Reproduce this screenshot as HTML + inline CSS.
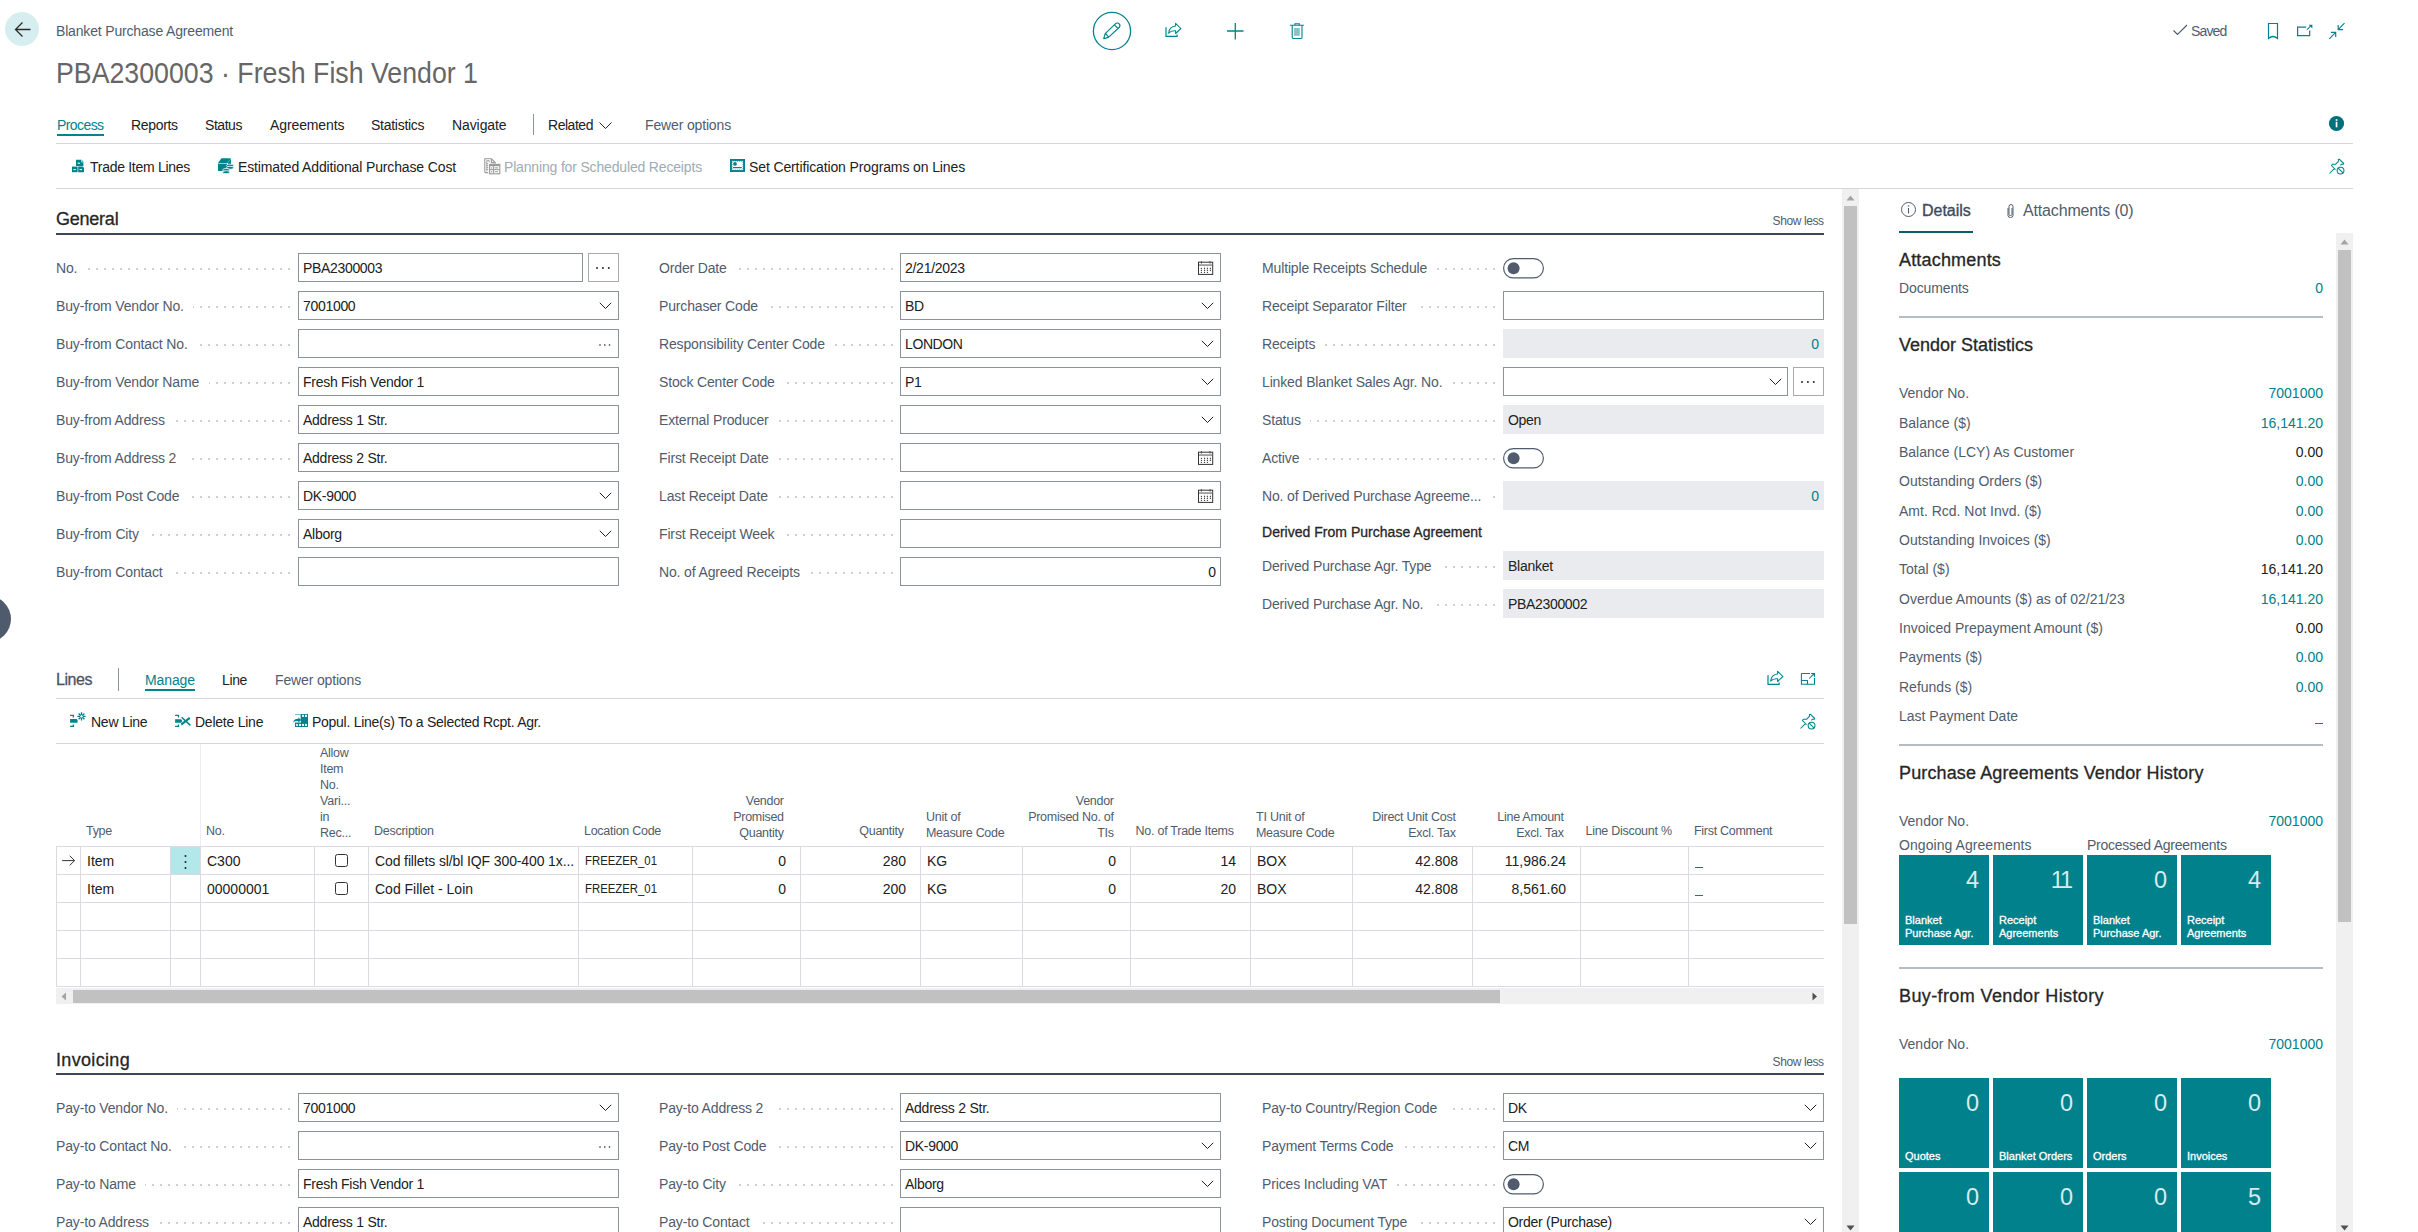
<!DOCTYPE html><html><head><meta charset="utf-8"><style>html,body{margin:0;padding:0;background:#fff;}#r{position:relative;width:2418px;height:1232px;overflow:hidden;background:#fff;font-family:"Liberation Sans",sans-serif;}#r>div,#r>svg{position:absolute;}.t{white-space:nowrap;}</style></head><body><div id="r"><svg style="left:5px;top:12px;" width="34" height="34" viewBox="0 0 34 34"><circle cx="17" cy="17" r="17" fill="#d7eef1"/><path d="M10.5 17.5H25.5M17.5 10.5L10.5 17.5L17.5 24.5" fill="none" stroke="#2b2b2b" stroke-width="1.3"/></svg>
<div class="t" style="top:24px;font-size:14px;line-height:14px;color:#505c6d;letter-spacing:-0.167px;left:56px;">Blanket Purchase Agreement</div>
<div class="t" style="top:58px;font-size:30px;line-height:30px;color:#666666;transform:scaleX(0.8910);transform-origin:left top;left:56px;">PBA2300003 · Fresh Fish Vendor 1</div>
<svg style="left:1091px;top:11px;" width="42" height="42" viewBox="0 0 42 42"><circle cx="21" cy="20" r="18.6" fill="none" stroke="#00838c" stroke-width="1.3"/><path d="M12.7 27.6L14.2 22.7L24.6 12.7Q26.5 11.2 28.2 12.9Q29.8 14.6 28.1 16.5L17.4 26.4Z M23.4 13.9L27 17.5 M14.5 22.5L17.5 25.8" fill="none" stroke="#00838c" stroke-width="1.15" stroke-linejoin="round"/></svg>
<svg style="left:1160px;top:18px;" width="24" height="22" viewBox="0 0 24 22"><path d="M6 9.2V18.3H17.1V16.4" fill="none" stroke="#00838c" stroke-width="1.2"/><path d="M8.6 15.2Q9.3 8.6 15.6 8.1V5.3L20.9 10.5L15.6 15.5V12.8Q11.2 12.3 8.6 15.2Z" fill="none" stroke="#00838c" stroke-width="1.05" stroke-linejoin="round"/></svg>
<svg style="left:1225px;top:21px;" width="22" height="20" viewBox="0 0 22 20"><path d="M2 10H18.5M10.3 2V18.5" fill="none" stroke="#00838c" stroke-width="1.3"/></svg>
<svg style="left:1288px;top:20px;" width="18" height="22" viewBox="0 0 18 22"><path d="M2.1 5.3H15.8M6.9 5.3V3.8H11.3V5.3M4.2 5.3V17.6Q4.2 18.5 5.1 18.5H13.1Q14 18.5 14 17.6V5.3" fill="none" stroke="#00838c" stroke-width="1.1"/><rect x="6.1" y="8" width="5.7" height="7.8" fill="#84c4c7"/></svg>
<svg style="left:2172px;top:23px;" width="18" height="14" viewBox="0 0 18 14"><path d="M1.5 7.5L5.5 11.5L15 2" fill="none" stroke="#505c6d" stroke-width="1.2"/></svg>
<div class="t" style="top:24px;font-size:14px;line-height:14px;color:#505c6d;letter-spacing:-0.839px;left:2191px;">Saved</div>
<svg style="left:2266px;top:22px;" width="14" height="18" viewBox="0 0 14 18"><path d="M2.5 1.5H11.5V16.5Q7 12.5 2.5 16.5Z" fill="none" stroke="#00838c" stroke-width="1.2"/></svg>
<svg style="left:2296px;top:23px;" width="18" height="15" viewBox="0 0 18 15"><path d="M10.2 4.2H1.6V12.7H13.7V7.4" fill="none" stroke="#00838c" stroke-width="1.2"/><path d="M11 6.6L15 2.6" fill="none" stroke="#00838c" stroke-width="1.1"/><path d="M12.6 1.8H16.4V5.6Z" fill="#00838c"/></svg>
<svg style="left:2328px;top:22px;" width="18" height="18" viewBox="0 0 18 18"><path d="M1.3 16.8L7.7 10.4M3 10.4H7.7V14.9M16.5 1.2L10.2 7.6M10.2 3V7.6H15" fill="none" stroke="#00838c" stroke-width="1.15"/></svg>
<div class="t" style="top:118px;font-size:14px;line-height:14px;color:#00838c;letter-spacing:-0.582px;left:57px;">Process</div>
<div class="t" style="top:118px;font-size:14px;line-height:14px;color:#212121;letter-spacing:-0.332px;left:131px;">Reports</div>
<div class="t" style="top:118px;font-size:14px;line-height:14px;color:#212121;letter-spacing:-0.448px;left:205px;">Status</div>
<div class="t" style="top:118px;font-size:14px;line-height:14px;color:#212121;letter-spacing:-0.108px;left:270px;">Agreements</div>
<div class="t" style="top:118px;font-size:14px;line-height:14px;color:#212121;letter-spacing:-0.271px;left:371px;">Statistics</div>
<div class="t" style="top:118px;font-size:14px;line-height:14px;color:#212121;letter-spacing:-0.094px;left:452px;">Navigate</div>
<div style="left:57px;top:134px;width:47px;height:2px;background:#00838c"></div>
<div style="left:533px;top:114px;width:1px;height:21px;background:#8a929e"></div>
<div class="t" style="top:118px;font-size:14px;line-height:14px;color:#212121;letter-spacing:-0.465px;left:548px;">Related</div>
<svg style="left:598px;top:121px;" width="15" height="9" viewBox="0 0 15 9"><path d="M1.5 1.5L7.5 7.5L13.5 1.5" fill="none" stroke="#212121" stroke-width="1"/></svg>
<div class="t" style="top:118px;font-size:14px;line-height:14px;color:#505c6d;letter-spacing:-0.149px;left:645px;">Fewer options</div>
<svg style="left:2328px;top:115px;" width="17" height="17" viewBox="0 0 17 17"><circle cx="8.5" cy="8.5" r="7.6" fill="#00707a"/><rect x="7.7" y="6.8" width="1.7" height="5.5" fill="#fff"/><rect x="7.7" y="4.2" width="1.7" height="1.7" fill="#fff"/></svg>
<div style="left:56px;top:143px;width:2297px;height:1px;background:#d3d6db"></div>
<svg style="left:72px;top:159px;" width="14" height="14" viewBox="0 0 14 14"><path d="M4 0.8H9.6L11.4 2.4V7H4Z" fill="#00838c"/><path d="M0 7.6H5.6V13.2H0Z" fill="#00838c"/><path d="M6.2 7.6H10.8L12 8.8V13.2H6.2Z" fill="#00838c"/><path d="M5.6 4.2H8M1.4 10.6H3.8M7.6 10.6H10" stroke="#fff" stroke-width="1"/><path d="M9.6 1V3H11.4" stroke="#fff" stroke-width="0.7" fill="none"/></svg>
<div class="t" style="top:160px;font-size:14px;line-height:14px;color:#212121;letter-spacing:-0.283px;left:90px;">Trade Item Lines</div>
<svg style="left:217px;top:157px;" width="18" height="18" viewBox="0 0 18 18"><path d="M1 6L4.5 1.2H14L10.5 6Z" fill="#00838c"/><rect x="1" y="6.6" width="9" height="7.4" fill="#00838c"/><path d="M11 5.6L14 1.8V8L11 10Z" fill="#00838c"/><ellipse cx="13" cy="8.6" rx="3.6" ry="1.5" fill="#00838c" stroke="#fff" stroke-width="0.8"/><ellipse cx="13" cy="10.8" rx="3.6" ry="1.5" fill="#00838c" stroke="#fff" stroke-width="0.8"/><ellipse cx="9.2" cy="13" rx="3.6" ry="1.5" fill="#00838c" stroke="#fff" stroke-width="0.8"/><ellipse cx="9.2" cy="15.2" rx="3.6" ry="1.5" fill="#00838c" stroke="#fff" stroke-width="0.8"/></svg>
<div class="t" style="top:160px;font-size:14px;line-height:14px;color:#212121;letter-spacing:-0.134px;left:238px;">Estimated Additional Purchase Cost</div>
<svg style="left:484px;top:158px;" width="17" height="17" viewBox="0 0 17 17"><path d="M0.8 14.6V0.8H7.4L11.2 4.6V5.8M0.8 14.6H4.2M7.4 1V4.6H11" fill="none" stroke="#9a9a9a" stroke-width="1.1"/><path d="M2.8 2.6H5.2V4.4M2.8 2.6V13.2M2.8 5.6H4.2M2.8 7.6H4.2M2.8 9.6H4.2M2.8 11.6H4.2" fill="none" stroke="#9a9a9a" stroke-width="0.9"/><rect x="5.6" y="6.4" width="10.2" height="9.4" fill="none" stroke="#9a9a9a" stroke-width="1.1"/><rect x="5.6" y="6.4" width="10.2" height="1.8" fill="#9a9a9a"/><path d="M5.6 11.6H15.8M9.4 6.4V15.8M10.6 9.9H14M10.6 13.7H14.2" stroke="#9a9a9a" stroke-width="1"/><circle cx="7.5" cy="9.9" r="0.7" fill="#9a9a9a"/><circle cx="7.5" cy="13.7" r="0.7" fill="#9a9a9a"/></svg>
<div class="t" style="top:160px;font-size:14px;line-height:14px;color:#a2aab5;letter-spacing:-0.166px;left:504px;">Planning for Scheduled Receipts</div>
<svg style="left:730px;top:159px;" width="15" height="13" viewBox="0 0 15 13"><rect x="0" y="0" width="15" height="13" fill="#00838c"/><rect x="1.9" y="1.9" width="11.2" height="9.2" fill="#fff"/><circle cx="3.1" cy="1.9" r="0.6" fill="#00838c"/><circle cx="3.1" cy="11.1" r="0.6" fill="#00838c"/><circle cx="5.3" cy="1.9" r="0.6" fill="#00838c"/><circle cx="5.3" cy="11.1" r="0.6" fill="#00838c"/><circle cx="7.5" cy="1.9" r="0.6" fill="#00838c"/><circle cx="7.5" cy="11.1" r="0.6" fill="#00838c"/><circle cx="9.7" cy="1.9" r="0.6" fill="#00838c"/><circle cx="9.7" cy="11.1" r="0.6" fill="#00838c"/><circle cx="11.9" cy="1.9" r="0.6" fill="#00838c"/><circle cx="11.9" cy="11.1" r="0.6" fill="#00838c"/><circle cx="1.9" cy="3.5" r="0.6" fill="#00838c"/><circle cx="13.1" cy="3.5" r="0.6" fill="#00838c"/><circle cx="1.9" cy="5.5" r="0.6" fill="#00838c"/><circle cx="13.1" cy="5.5" r="0.6" fill="#00838c"/><circle cx="1.9" cy="7.5" r="0.6" fill="#00838c"/><circle cx="13.1" cy="7.5" r="0.6" fill="#00838c"/><circle cx="1.9" cy="9.5" r="0.6" fill="#00838c"/><circle cx="13.1" cy="9.5" r="0.6" fill="#00838c"/><circle cx="5" cy="4.9" r="1.9" fill="#00838c"/><rect x="2.9" y="8" width="8.8" height="1.2" fill="#00838c"/></svg>
<div class="t" style="top:160px;font-size:14px;line-height:14px;color:#212121;letter-spacing:-0.120px;left:749px;">Set Certification Programs on Lines</div>
<svg style="left:2324px;top:154px;" width="24" height="24" viewBox="0 0 24 24"><path d="M5.45 19.5L10.3 14.6M11.5 15.6L7.4 11.5L8.4 10.3H11.5L14.4 7.4V5.5L15.3 5.2L19.7 9.5L19.3 10.3H17.3L16.4 11.4" fill="none" stroke="#00838c" stroke-width="1.05" stroke-linejoin="round"/><circle cx="16.55" cy="16.6" r="3.4" fill="none" stroke="#00838c" stroke-width="1.05"/><path d="M14.2 14.2L18.9 18.9" stroke="#00838c" stroke-width="1.05"/></svg>
<div style="left:56px;top:188px;width:2297px;height:1px;background:#d3d6db"></div>
<div class="t" style="top:210px;font-size:18px;line-height:18px;color:#262626;-webkit-text-stroke:0.3px #262626;letter-spacing:-0.234px;left:56px;">General</div>
<div class="t" style="top:215px;font-size:12px;line-height:12px;color:#505c6d;letter-spacing:-0.410px;right:594px;margin-right:0.410px;">Show less</div>
<div style="left:56px;top:233px;width:1768px;height:2px;background:#3c4757"></div>
<div class="t" style="top:261px;font-size:14px;line-height:14px;color:#505c6d;letter-spacing:-0.160px;left:56px;">No.</div>
<div style="left:87px;top:268px;width:203px;height:2px;background:repeating-linear-gradient(to left,#cdd1d7 0 2px,transparent 2px 8px)"></div>
<div style="left:298px;top:253px;width:285px;height:29px;box-sizing:border-box;border:1px solid #8a929e;background:#fff"></div>
<div style="left:588px;top:253px;width:31px;height:29px;box-sizing:border-box;border:1px solid #aaaaaa;background:#fff"></div>
<svg style="left:595.4px;top:266.2px;" width="15.8" height="4" viewBox="0 0 15.8 4"><circle cx="2.0" cy="2" r="0.95" fill="#212121"/><circle cx="7.9" cy="2" r="0.95" fill="#212121"/><circle cx="13.8" cy="2" r="0.95" fill="#212121"/></svg>
<div class="t" style="top:261px;font-size:14px;line-height:14px;color:#212121;letter-spacing:-0.330px;left:303px;">PBA2300003</div>
<div class="t" style="top:299px;font-size:14px;line-height:14px;color:#505c6d;letter-spacing:-0.151px;left:56px;">Buy-from Vendor No.</div>
<div style="left:193px;top:306px;width:97px;height:2px;background:repeating-linear-gradient(to left,#cdd1d7 0 2px,transparent 2px 8px)"></div>
<div style="left:298px;top:291px;width:321px;height:29px;box-sizing:border-box;border:1px solid #8a929e;background:#fff"></div>
<svg style="left:599px;top:302px;" width="14" height="8" viewBox="0 0 14 8"><path d="M0.8 0.8L6.5 6.5L12.2 0.8" fill="none" stroke="#212121" stroke-width="1"/></svg>
<div class="t" style="top:299px;font-size:14px;line-height:14px;color:#212121;letter-spacing:-0.311px;left:303px;">7001000</div>
<div class="t" style="top:337px;font-size:14px;line-height:14px;color:#505c6d;letter-spacing:-0.148px;left:56px;">Buy-from Contact No.</div>
<div style="left:197px;top:344px;width:93px;height:2px;background:repeating-linear-gradient(to left,#cdd1d7 0 2px,transparent 2px 8px)"></div>
<div style="left:298px;top:329px;width:321px;height:29px;box-sizing:border-box;border:1px solid #8a929e;background:#fff"></div>
<svg style="left:598.05px;top:342.5px;" width="13.5" height="4" viewBox="0 0 13.5 4"><circle cx="2.0" cy="2" r="0.8" fill="#212121"/><circle cx="6.75" cy="2" r="0.8" fill="#212121"/><circle cx="11.5" cy="2" r="0.8" fill="#212121"/></svg>
<div class="t" style="top:375px;font-size:14px;line-height:14px;color:#505c6d;letter-spacing:-0.161px;left:56px;">Buy-from Vendor Name</div>
<div style="left:209px;top:382px;width:81px;height:2px;background:repeating-linear-gradient(to left,#cdd1d7 0 2px,transparent 2px 8px)"></div>
<div style="left:298px;top:367px;width:321px;height:29px;box-sizing:border-box;border:1px solid #8a929e;background:#fff"></div>
<div class="t" style="top:375px;font-size:14px;line-height:14px;color:#212121;letter-spacing:-0.265px;left:303px;">Fresh Fish Vendor 1</div>
<div class="t" style="top:413px;font-size:14px;line-height:14px;color:#505c6d;letter-spacing:-0.153px;left:56px;">Buy-from Address</div>
<div style="left:174px;top:420px;width:116px;height:2px;background:repeating-linear-gradient(to left,#cdd1d7 0 2px,transparent 2px 8px)"></div>
<div style="left:298px;top:405px;width:321px;height:29px;box-sizing:border-box;border:1px solid #8a929e;background:#fff"></div>
<div class="t" style="top:413px;font-size:14px;line-height:14px;color:#212121;letter-spacing:-0.251px;left:303px;">Address 1 Str.</div>
<div class="t" style="top:451px;font-size:14px;line-height:14px;color:#505c6d;letter-spacing:-0.150px;left:56px;">Buy-from Address 2</div>
<div style="left:186px;top:458px;width:104px;height:2px;background:repeating-linear-gradient(to left,#cdd1d7 0 2px,transparent 2px 8px)"></div>
<div style="left:298px;top:443px;width:321px;height:29px;box-sizing:border-box;border:1px solid #8a929e;background:#fff"></div>
<div class="t" style="top:451px;font-size:14px;line-height:14px;color:#212121;letter-spacing:-0.251px;left:303px;">Address 2 Str.</div>
<div class="t" style="top:489px;font-size:14px;line-height:14px;color:#505c6d;letter-spacing:-0.154px;left:56px;">Buy-from Post Code</div>
<div style="left:189px;top:496px;width:101px;height:2px;background:repeating-linear-gradient(to left,#cdd1d7 0 2px,transparent 2px 8px)"></div>
<div style="left:298px;top:481px;width:321px;height:29px;box-sizing:border-box;border:1px solid #8a929e;background:#fff"></div>
<svg style="left:599px;top:492px;" width="14" height="8" viewBox="0 0 14 8"><path d="M0.8 0.8L6.5 6.5L12.2 0.8" fill="none" stroke="#212121" stroke-width="1"/></svg>
<div class="t" style="top:489px;font-size:14px;line-height:14px;color:#212121;letter-spacing:-0.316px;left:303px;">DK-9000</div>
<div class="t" style="top:527px;font-size:14px;line-height:14px;color:#505c6d;letter-spacing:-0.143px;left:56px;">Buy-from City</div>
<div style="left:148px;top:534px;width:142px;height:2px;background:repeating-linear-gradient(to left,#cdd1d7 0 2px,transparent 2px 8px)"></div>
<div style="left:298px;top:519px;width:321px;height:29px;box-sizing:border-box;border:1px solid #8a929e;background:#fff"></div>
<svg style="left:599px;top:530px;" width="14" height="8" viewBox="0 0 14 8"><path d="M0.8 0.8L6.5 6.5L12.2 0.8" fill="none" stroke="#212121" stroke-width="1"/></svg>
<div class="t" style="top:527px;font-size:14px;line-height:14px;color:#212121;letter-spacing:-0.270px;left:303px;">Alborg</div>
<div class="t" style="top:565px;font-size:14px;line-height:14px;color:#505c6d;letter-spacing:-0.150px;left:56px;">Buy-from Contact</div>
<div style="left:172px;top:572px;width:118px;height:2px;background:repeating-linear-gradient(to left,#cdd1d7 0 2px,transparent 2px 8px)"></div>
<div style="left:298px;top:557px;width:321px;height:29px;box-sizing:border-box;border:1px solid #8a929e;background:#fff"></div>
<div class="t" style="top:261px;font-size:14px;line-height:14px;color:#505c6d;letter-spacing:-0.152px;left:659px;">Order Date</div>
<div style="left:736px;top:268px;width:157px;height:2px;background:repeating-linear-gradient(to left,#cdd1d7 0 2px,transparent 2px 8px)"></div>
<div style="left:900px;top:253px;width:321px;height:29px;box-sizing:border-box;border:1px solid #8a929e;background:#fff"></div>
<svg style="left:1194px;top:256px;" width="22" height="22" viewBox="0 0 22 22"><rect x="4.5" y="6.2" width="14.2" height="12.2" fill="none" stroke="#333" stroke-width="1"/><rect x="5" y="8.3" width="13.2" height="1.5" fill="#8a8a8a"/><path d="M7.4 5V7.6M16 5V7.6" stroke="#444" stroke-width="0.9"/><path d="M10.5 10.2V15M13.4 10.2V15M16.4 10.2V15" stroke="#c9c9d6" stroke-width="0.6"/><circle cx="7.4" cy="12.5" r="0.65" fill="#444"/><circle cx="7.4" cy="14.4" r="0.65" fill="#444"/><circle cx="7.4" cy="16.4" r="0.65" fill="#444"/><circle cx="10.5" cy="12.5" r="0.65" fill="#444"/><circle cx="10.5" cy="14.4" r="0.65" fill="#444"/><circle cx="10.5" cy="16.4" r="0.65" fill="#444"/><circle cx="13.4" cy="12.5" r="0.65" fill="#444"/><circle cx="13.4" cy="14.4" r="0.65" fill="#444"/><circle cx="13.4" cy="16.4" r="0.65" fill="#444"/><circle cx="16.4" cy="12.5" r="0.65" fill="#444"/><circle cx="16.4" cy="14.4" r="0.65" fill="#444"/></svg>
<div class="t" style="top:261px;font-size:14px;line-height:14px;color:#212121;letter-spacing:-0.277px;left:905px;">2/21/2023</div>
<div class="t" style="top:299px;font-size:14px;line-height:14px;color:#505c6d;letter-spacing:-0.159px;left:659px;">Purchaser Code</div>
<div style="left:767px;top:306px;width:126px;height:2px;background:repeating-linear-gradient(to left,#cdd1d7 0 2px,transparent 2px 8px)"></div>
<div style="left:900px;top:291px;width:321px;height:29px;box-sizing:border-box;border:1px solid #8a929e;background:#fff"></div>
<svg style="left:1201px;top:302px;" width="14" height="8" viewBox="0 0 14 8"><path d="M0.8 0.8L6.5 6.5L12.2 0.8" fill="none" stroke="#212121" stroke-width="1"/></svg>
<div class="t" style="top:299px;font-size:14px;line-height:14px;color:#212121;letter-spacing:-0.389px;left:905px;">BD</div>
<div class="t" style="top:337px;font-size:14px;line-height:14px;color:#505c6d;letter-spacing:-0.144px;left:659px;">Responsibility Center Code</div>
<div style="left:834px;top:344px;width:59px;height:2px;background:repeating-linear-gradient(to left,#cdd1d7 0 2px,transparent 2px 8px)"></div>
<div style="left:900px;top:329px;width:321px;height:29px;box-sizing:border-box;border:1px solid #8a929e;background:#fff"></div>
<svg style="left:1201px;top:340px;" width="14" height="8" viewBox="0 0 14 8"><path d="M0.8 0.8L6.5 6.5L12.2 0.8" fill="none" stroke="#212121" stroke-width="1"/></svg>
<div class="t" style="top:337px;font-size:14px;line-height:14px;color:#212121;letter-spacing:-0.399px;left:905px;">LONDON</div>
<div class="t" style="top:375px;font-size:14px;line-height:14px;color:#505c6d;letter-spacing:-0.153px;left:659px;">Stock Center Code</div>
<div style="left:784px;top:382px;width:109px;height:2px;background:repeating-linear-gradient(to left,#cdd1d7 0 2px,transparent 2px 8px)"></div>
<div style="left:900px;top:367px;width:321px;height:29px;box-sizing:border-box;border:1px solid #8a929e;background:#fff"></div>
<svg style="left:1201px;top:378px;" width="14" height="8" viewBox="0 0 14 8"><path d="M0.8 0.8L6.5 6.5L12.2 0.8" fill="none" stroke="#212121" stroke-width="1"/></svg>
<div class="t" style="top:375px;font-size:14px;line-height:14px;color:#212121;letter-spacing:-0.342px;left:905px;">P1</div>
<div class="t" style="top:413px;font-size:14px;line-height:14px;color:#505c6d;letter-spacing:-0.145px;left:659px;">External Producer</div>
<div style="left:778px;top:420px;width:115px;height:2px;background:repeating-linear-gradient(to left,#cdd1d7 0 2px,transparent 2px 8px)"></div>
<div style="left:900px;top:405px;width:321px;height:29px;box-sizing:border-box;border:1px solid #8a929e;background:#fff"></div>
<svg style="left:1201px;top:416px;" width="14" height="8" viewBox="0 0 14 8"><path d="M0.8 0.8L6.5 6.5L12.2 0.8" fill="none" stroke="#212121" stroke-width="1"/></svg>
<div class="t" style="top:451px;font-size:14px;line-height:14px;color:#505c6d;letter-spacing:-0.137px;left:659px;">First Receipt Date</div>
<div style="left:778px;top:458px;width:115px;height:2px;background:repeating-linear-gradient(to left,#cdd1d7 0 2px,transparent 2px 8px)"></div>
<div style="left:900px;top:443px;width:321px;height:29px;box-sizing:border-box;border:1px solid #8a929e;background:#fff"></div>
<svg style="left:1194px;top:446px;" width="22" height="22" viewBox="0 0 22 22"><rect x="4.5" y="6.2" width="14.2" height="12.2" fill="none" stroke="#333" stroke-width="1"/><rect x="5" y="8.3" width="13.2" height="1.5" fill="#8a8a8a"/><path d="M7.4 5V7.6M16 5V7.6" stroke="#444" stroke-width="0.9"/><path d="M10.5 10.2V15M13.4 10.2V15M16.4 10.2V15" stroke="#c9c9d6" stroke-width="0.6"/><circle cx="7.4" cy="12.5" r="0.65" fill="#444"/><circle cx="7.4" cy="14.4" r="0.65" fill="#444"/><circle cx="7.4" cy="16.4" r="0.65" fill="#444"/><circle cx="10.5" cy="12.5" r="0.65" fill="#444"/><circle cx="10.5" cy="14.4" r="0.65" fill="#444"/><circle cx="10.5" cy="16.4" r="0.65" fill="#444"/><circle cx="13.4" cy="12.5" r="0.65" fill="#444"/><circle cx="13.4" cy="14.4" r="0.65" fill="#444"/><circle cx="13.4" cy="16.4" r="0.65" fill="#444"/><circle cx="16.4" cy="12.5" r="0.65" fill="#444"/><circle cx="16.4" cy="14.4" r="0.65" fill="#444"/></svg>
<div class="t" style="top:489px;font-size:14px;line-height:14px;color:#505c6d;letter-spacing:-0.144px;left:659px;">Last Receipt Date</div>
<div style="left:777px;top:496px;width:116px;height:2px;background:repeating-linear-gradient(to left,#cdd1d7 0 2px,transparent 2px 8px)"></div>
<div style="left:900px;top:481px;width:321px;height:29px;box-sizing:border-box;border:1px solid #8a929e;background:#fff"></div>
<svg style="left:1194px;top:484px;" width="22" height="22" viewBox="0 0 22 22"><rect x="4.5" y="6.2" width="14.2" height="12.2" fill="none" stroke="#333" stroke-width="1"/><rect x="5" y="8.3" width="13.2" height="1.5" fill="#8a8a8a"/><path d="M7.4 5V7.6M16 5V7.6" stroke="#444" stroke-width="0.9"/><path d="M10.5 10.2V15M13.4 10.2V15M16.4 10.2V15" stroke="#c9c9d6" stroke-width="0.6"/><circle cx="7.4" cy="12.5" r="0.65" fill="#444"/><circle cx="7.4" cy="14.4" r="0.65" fill="#444"/><circle cx="7.4" cy="16.4" r="0.65" fill="#444"/><circle cx="10.5" cy="12.5" r="0.65" fill="#444"/><circle cx="10.5" cy="14.4" r="0.65" fill="#444"/><circle cx="10.5" cy="16.4" r="0.65" fill="#444"/><circle cx="13.4" cy="12.5" r="0.65" fill="#444"/><circle cx="13.4" cy="14.4" r="0.65" fill="#444"/><circle cx="13.4" cy="16.4" r="0.65" fill="#444"/><circle cx="16.4" cy="12.5" r="0.65" fill="#444"/><circle cx="16.4" cy="14.4" r="0.65" fill="#444"/></svg>
<div class="t" style="top:527px;font-size:14px;line-height:14px;color:#505c6d;letter-spacing:-0.144px;left:659px;">First Receipt Week</div>
<div style="left:784px;top:534px;width:109px;height:2px;background:repeating-linear-gradient(to left,#cdd1d7 0 2px,transparent 2px 8px)"></div>
<div style="left:900px;top:519px;width:321px;height:29px;box-sizing:border-box;border:1px solid #8a929e;background:#fff"></div>
<div class="t" style="top:565px;font-size:14px;line-height:14px;color:#505c6d;letter-spacing:-0.144px;left:659px;">No. of Agreed Receipts</div>
<div style="left:809px;top:572px;width:84px;height:2px;background:repeating-linear-gradient(to left,#cdd1d7 0 2px,transparent 2px 8px)"></div>
<div style="left:900px;top:557px;width:321px;height:29px;box-sizing:border-box;border:1px solid #8a929e;background:#fff"></div>
<div class="t" style="top:565px;font-size:14px;line-height:14px;color:#212121;right:1202px;">0</div>
<div class="t" style="top:261px;font-size:14px;line-height:14px;color:#505c6d;letter-spacing:-0.143px;left:1262px;">Multiple Receipts Schedule</div>
<div style="left:1437px;top:268px;width:58px;height:2px;background:repeating-linear-gradient(to left,#cdd1d7 0 2px,transparent 2px 8px)"></div>
<svg style="left:1503px;top:258px;" width="41" height="21" viewBox="0 0 41 21"><rect x="0.6" y="0.6" width="39.8" height="19.3" rx="9.6" fill="#fff" stroke="#505c6d" stroke-width="1.2"/><circle cx="10.6" cy="10.2" r="6" fill="#505c6d"/></svg>
<div class="t" style="top:299px;font-size:14px;line-height:14px;color:#505c6d;letter-spacing:-0.136px;left:1262px;">Receipt Separator Filter</div>
<div style="left:1416px;top:306px;width:79px;height:2px;background:repeating-linear-gradient(to left,#cdd1d7 0 2px,transparent 2px 8px)"></div>
<div style="left:1503px;top:291px;width:321px;height:29px;box-sizing:border-box;border:1px solid #8a929e;background:#fff"></div>
<div class="t" style="top:337px;font-size:14px;line-height:14px;color:#505c6d;letter-spacing:-0.150px;left:1262px;">Receipts</div>
<div style="left:1325px;top:344px;width:170px;height:2px;background:repeating-linear-gradient(to left,#cdd1d7 0 2px,transparent 2px 8px)"></div>
<div style="left:1503px;top:329px;width:321px;height:29px;background:#eaebee"></div>
<div class="t" style="top:337px;font-size:14px;line-height:14px;color:#00808a;right:599px;">0</div>
<div class="t" style="top:375px;font-size:14px;line-height:14px;color:#505c6d;letter-spacing:-0.140px;left:1262px;">Linked Blanket Sales Agr. No.</div>
<div style="left:1452px;top:382px;width:43px;height:2px;background:repeating-linear-gradient(to left,#cdd1d7 0 2px,transparent 2px 8px)"></div>
<div style="left:1503px;top:367px;width:285px;height:29px;box-sizing:border-box;border:1px solid #8a929e;background:#fff"></div>
<div style="left:1793px;top:367px;width:31px;height:29px;box-sizing:border-box;border:1px solid #aaaaaa;background:#fff"></div>
<svg style="left:1769px;top:378px;" width="14" height="8" viewBox="0 0 14 8"><path d="M0.8 0.8L6.5 6.5L12.2 0.8" fill="none" stroke="#212121" stroke-width="1"/></svg>
<svg style="left:1800.3999999999999px;top:380.2px;" width="15.8" height="4" viewBox="0 0 15.8 4"><circle cx="2.0" cy="2" r="0.95" fill="#212121"/><circle cx="7.9" cy="2" r="0.95" fill="#212121"/><circle cx="13.8" cy="2" r="0.95" fill="#212121"/></svg>
<div class="t" style="top:413px;font-size:14px;line-height:14px;color:#505c6d;letter-spacing:-0.146px;left:1262px;">Status</div>
<div style="left:1310px;top:420px;width:185px;height:2px;background:repeating-linear-gradient(to left,#cdd1d7 0 2px,transparent 2px 8px)"></div>
<div style="left:1503px;top:405px;width:321px;height:29px;background:#eaebee"></div>
<div class="t" style="top:413px;font-size:14px;line-height:14px;color:#212121;letter-spacing:-0.342px;left:1508px;">Open</div>
<div class="t" style="top:451px;font-size:14px;line-height:14px;color:#505c6d;letter-spacing:-0.140px;left:1262px;">Active</div>
<div style="left:1309px;top:458px;width:186px;height:2px;background:repeating-linear-gradient(to left,#cdd1d7 0 2px,transparent 2px 8px)"></div>
<svg style="left:1503px;top:448px;" width="41" height="21" viewBox="0 0 41 21"><rect x="0.6" y="0.6" width="39.8" height="19.3" rx="9.6" fill="#fff" stroke="#505c6d" stroke-width="1.2"/><circle cx="10.6" cy="10.2" r="6" fill="#505c6d"/></svg>
<div class="t" style="top:489px;font-size:14px;line-height:14px;color:#505c6d;letter-spacing:-0.145px;left:1262px;">No. of Derived Purchase Agreeme...</div>
<div style="left:1491px;top:496px;width:4px;height:2px;background:repeating-linear-gradient(to left,#cdd1d7 0 2px,transparent 2px 8px)"></div>
<div style="left:1503px;top:481px;width:321px;height:29px;background:#eaebee"></div>
<div class="t" style="top:489px;font-size:14px;line-height:14px;color:#00808a;right:599px;">0</div>
<div class="t" style="top:525px;font-size:14px;line-height:14px;color:#262626;-webkit-text-stroke:0.3px #262626;letter-spacing:0.018px;left:1262px;">Derived From Purchase Agreement</div>
<div class="t" style="top:559px;font-size:14px;line-height:14px;color:#505c6d;letter-spacing:-0.147px;left:1262px;">Derived Purchase Agr. Type</div>
<div style="left:1441px;top:566px;width:54px;height:2px;background:repeating-linear-gradient(to left,#cdd1d7 0 2px,transparent 2px 8px)"></div>
<div style="left:1503px;top:551px;width:321px;height:29px;background:#eaebee"></div>
<div class="t" style="top:559px;font-size:14px;line-height:14px;color:#212121;letter-spacing:-0.267px;left:1508px;">Blanket</div>
<div class="t" style="top:597px;font-size:14px;line-height:14px;color:#505c6d;letter-spacing:-0.145px;left:1262px;">Derived Purchase Agr. No.</div>
<div style="left:1433px;top:604px;width:62px;height:2px;background:repeating-linear-gradient(to left,#cdd1d7 0 2px,transparent 2px 8px)"></div>
<div style="left:1503px;top:589px;width:321px;height:29px;background:#eaebee"></div>
<div class="t" style="top:597px;font-size:14px;line-height:14px;color:#212121;letter-spacing:-0.330px;left:1508px;">PBA2300002</div>
<div class="t" style="top:672px;font-size:16px;line-height:16px;color:#4a5567;-webkit-text-stroke:0.3px #4a5567;letter-spacing:-0.450px;left:56px;">Lines</div>
<div style="left:118px;top:668px;width:1px;height:23px;background:#8a929e"></div>
<div class="t" style="top:673px;font-size:14px;line-height:14px;color:#00838c;letter-spacing:-0.099px;left:145px;">Manage</div>
<div style="left:145px;top:689px;width:50px;height:2px;background:#00838c"></div>
<div class="t" style="top:673px;font-size:14px;line-height:14px;color:#212121;letter-spacing:-0.367px;left:222px;">Line</div>
<div class="t" style="top:673px;font-size:14px;line-height:14px;color:#505c6d;letter-spacing:-0.149px;left:275px;">Fewer options</div>
<svg style="left:1762px;top:666px;" width="24" height="22" viewBox="0 0 24 22"><path d="M6 9.2V18.3H17.1V16.4" fill="none" stroke="#00838c" stroke-width="1.2"/><path d="M8.6 15.2Q9.3 8.6 15.6 8.1V5.3L20.9 10.5L15.6 15.5V12.8Q11.2 12.3 8.6 15.2Z" fill="none" stroke="#00838c" stroke-width="1.05" stroke-linejoin="round"/></svg>
<svg style="left:1795px;top:666px;" width="26" height="24" viewBox="0 0 26 24"><path d="M6.4 7.4H15M16.2 7.4H19.5V10.7M19.5 12V18.3H6.4V7.4M6.4 14.4H12.5V18.3M14.2 12.5L18.6 8.1" fill="none" stroke="#00838c" stroke-width="1.05"/><path d="M16.4 7H19.9V10.5Z" fill="#00838c"/></svg>
<div style="left:56px;top:698px;width:1768px;height:1px;background:#d3d6db"></div>
<svg style="left:69px;top:710px;" width="18" height="18" viewBox="0 0 18 18"><path d="M1.1 5.4H4.4V7.4M1.1 16.4H4.4V14.4" fill="none" stroke="#00838c" stroke-width="1.3"/><path d="M1.1 9.1H7.6L8.6 10V12.8H1.1Z" fill="#00838c"/><path d="M12.5 2.3V10.5M8.4 6.4H16.6M9.6 3.5L15.4 9.3M15.4 3.5L9.6 9.3" stroke="#00838c" stroke-width="1.3"/><circle cx="12.5" cy="6.4" r="1.2" fill="#fff"/></svg>
<div class="t" style="top:715px;font-size:14px;line-height:14px;color:#212121;letter-spacing:-0.246px;left:91px;">New Line</div>
<svg style="left:174px;top:710px;" width="18" height="18" viewBox="0 0 18 18"><path d="M1.1 5.4H4.5V7.4M1.1 16.4H4.5V14.4" fill="none" stroke="#00838c" stroke-width="1.3"/><path d="M1.1 9.2H7.2L8.4 11L7.2 12.8H1.1Z" fill="#00838c"/><path d="M7.6 7.2L16.4 15.4" stroke="#00838c" stroke-width="1.5"/><path d="M7.2 14.6L15.8 7.9" stroke="#00838c" stroke-width="2.1"/></svg>
<div class="t" style="top:715px;font-size:14px;line-height:14px;color:#212121;letter-spacing:-0.239px;left:195px;">Delete Line</div>
<svg style="left:292px;top:712px;" width="18" height="17" viewBox="0 0 18 17"><rect x="3" y="2" width="13" height="13" fill="#00838c"/><rect x="10.1" y="2.8" width="1.8" height="2.1" fill="#fff"/><rect x="13" y="2.8" width="1.9" height="2.1" fill="#fff"/><rect x="4.2" y="11.9" width="1.6" height="2.1" fill="#fff"/><rect x="7.1" y="11.9" width="1.9" height="2.1" fill="#fff"/><rect x="10.1" y="11.9" width="1.8" height="2.1" fill="#fff"/><rect x="13" y="11.9" width="1.9" height="2.1" fill="#fff"/><path d="M2.8 2.5H8.6V5.6L9 10.6H2.8Z" fill="#fff"/><path d="M1.2 10.4Q1.8 6.6 6.4 6.8V5.4L9.4 8.1L6.4 10.6V9.2Q3.4 8.8 1.2 10.4Z" fill="#00838c"/></svg>
<div class="t" style="top:715px;font-size:14px;line-height:14px;color:#212121;letter-spacing:-0.268px;left:312px;">Popul. Line(s) To a Selected Rcpt. Agr.</div>
<svg style="left:1795px;top:709px;" width="24" height="24" viewBox="0 0 24 24"><path d="M5.45 19.5L10.3 14.6M11.5 15.6L7.4 11.5L8.4 10.3H11.5L14.4 7.4V5.5L15.3 5.2L19.7 9.5L19.3 10.3H17.3L16.4 11.4" fill="none" stroke="#00838c" stroke-width="1.05" stroke-linejoin="round"/><circle cx="16.55" cy="16.6" r="3.4" fill="none" stroke="#00838c" stroke-width="1.05"/><path d="M14.2 14.2L18.9 18.9" stroke="#00838c" stroke-width="1.05"/></svg>
<div style="left:56px;top:743px;width:1768px;height:1px;background:#d3d6db"></div>
<div style="left:56px;top:846px;width:1768px;height:1px;background:#d9dbe0"></div>
<div style="left:56px;top:874px;width:1768px;height:1px;background:#d9dbe0"></div>
<div style="left:56px;top:902px;width:1768px;height:1px;background:#d9dbe0"></div>
<div style="left:56px;top:930px;width:1768px;height:1px;background:#d9dbe0"></div>
<div style="left:56px;top:958px;width:1768px;height:1px;background:#d9dbe0"></div>
<div style="left:56px;top:986px;width:1768px;height:1px;background:#d9dbe0"></div>
<div style="left:56px;top:846px;width:1px;height:141px;background:#d9dbe0"></div>
<div style="left:80px;top:846px;width:1px;height:141px;background:#d9dbe0"></div>
<div style="left:170px;top:846px;width:1px;height:141px;background:#d9dbe0"></div>
<div style="left:200px;top:846px;width:1px;height:141px;background:#d9dbe0"></div>
<div style="left:314px;top:846px;width:1px;height:141px;background:#d9dbe0"></div>
<div style="left:368px;top:846px;width:1px;height:141px;background:#d9dbe0"></div>
<div style="left:578px;top:846px;width:1px;height:141px;background:#d9dbe0"></div>
<div style="left:692px;top:846px;width:1px;height:141px;background:#d9dbe0"></div>
<div style="left:800px;top:846px;width:1px;height:141px;background:#d9dbe0"></div>
<div style="left:920px;top:846px;width:1px;height:141px;background:#d9dbe0"></div>
<div style="left:1022px;top:846px;width:1px;height:141px;background:#d9dbe0"></div>
<div style="left:1130px;top:846px;width:1px;height:141px;background:#d9dbe0"></div>
<div style="left:1250px;top:846px;width:1px;height:141px;background:#d9dbe0"></div>
<div style="left:1352px;top:846px;width:1px;height:141px;background:#d9dbe0"></div>
<div style="left:1472px;top:846px;width:1px;height:141px;background:#d9dbe0"></div>
<div style="left:1580px;top:846px;width:1px;height:141px;background:#d9dbe0"></div>
<div style="left:1688px;top:846px;width:1px;height:141px;background:#d9dbe0"></div>
<div style="left:200px;top:744px;width:1px;height:102px;background:#eceef1"></div>
<div style="left:171px;top:847px;width:29px;height:27px;background:#b3e8eb"></div>
<svg style="left:183px;top:853px;" width="5" height="18" viewBox="0 0 5 18"><circle cx="2.5" cy="3" r="1" fill="#212121"/><circle cx="2.5" cy="9" r="1" fill="#212121"/><circle cx="2.5" cy="15" r="1" fill="#212121"/></svg>
<svg style="left:60px;top:854px;" width="17" height="13" viewBox="0 0 17 13"><path d="M2.2 6.6H14.6M9.7 1.8L14.6 6.6L9.7 11.4" fill="none" stroke="#333" stroke-width="1"/></svg>
<div class="t" style="top:825px;font-size:12.5px;line-height:12.5px;color:#505c6d;letter-spacing:-0.305px;left:86px;">Type</div>
<div class="t" style="top:825px;font-size:12.5px;line-height:12.5px;color:#505c6d;letter-spacing:-0.292px;left:206px;">No.</div>
<div class="t" style="top:747px;font-size:12.5px;line-height:12.5px;color:#505c6d;letter-spacing:-0.269px;left:320px;">Allow</div>
<div class="t" style="top:763px;font-size:12.5px;line-height:12.5px;color:#505c6d;letter-spacing:-0.273px;left:320px;">Item</div>
<div class="t" style="top:779px;font-size:12.5px;line-height:12.5px;color:#505c6d;letter-spacing:-0.292px;left:320px;">No.</div>
<div class="t" style="top:795px;font-size:12.5px;line-height:12.5px;color:#505c6d;letter-spacing:-0.204px;left:320px;">Vari...</div>
<div class="t" style="top:811px;font-size:12.5px;line-height:12.5px;color:#505c6d;letter-spacing:-0.219px;left:320px;">in</div>
<div class="t" style="top:827px;font-size:12.5px;line-height:12.5px;color:#505c6d;letter-spacing:-0.245px;left:320px;">Rec...</div>
<div class="t" style="top:825px;font-size:12.5px;line-height:12.5px;color:#505c6d;letter-spacing:-0.256px;left:374px;">Description</div>
<div class="t" style="top:825px;font-size:12.5px;line-height:12.5px;color:#505c6d;letter-spacing:-0.279px;left:584px;">Location Code</div>
<div class="t" style="top:795px;font-size:12.5px;line-height:12.5px;color:#505c6d;letter-spacing:-0.297px;right:1634px;margin-right:0.297px;">Vendor</div>
<div class="t" style="top:811px;font-size:12.5px;line-height:12.5px;color:#505c6d;letter-spacing:-0.297px;right:1634px;margin-right:0.297px;">Promised</div>
<div class="t" style="top:827px;font-size:12.5px;line-height:12.5px;color:#505c6d;letter-spacing:-0.262px;right:1634px;margin-right:0.262px;">Quantity</div>
<div class="t" style="top:825px;font-size:12.5px;line-height:12.5px;color:#505c6d;letter-spacing:-0.262px;right:1514px;margin-right:0.262px;">Quantity</div>
<div class="t" style="top:811px;font-size:12.5px;line-height:12.5px;color:#505c6d;letter-spacing:-0.232px;left:926px;">Unit of</div>
<div class="t" style="top:827px;font-size:12.5px;line-height:12.5px;color:#505c6d;letter-spacing:-0.307px;left:926px;">Measure Code</div>
<div class="t" style="top:795px;font-size:12.5px;line-height:12.5px;color:#505c6d;letter-spacing:-0.297px;right:1304px;margin-right:0.297px;">Vendor</div>
<div class="t" style="top:811px;font-size:12.5px;line-height:12.5px;color:#505c6d;letter-spacing:-0.269px;right:1304px;margin-right:0.269px;">Promised No. of</div>
<div class="t" style="top:827px;font-size:12.5px;line-height:12.5px;color:#505c6d;letter-spacing:-0.260px;right:1304px;margin-right:0.260px;">TIs</div>
<div class="t" style="top:825px;font-size:12.5px;line-height:12.5px;color:#505c6d;letter-spacing:-0.257px;right:1184px;margin-right:0.257px;">No. of Trade Items</div>
<div class="t" style="top:811px;font-size:12.5px;line-height:12.5px;color:#505c6d;letter-spacing:-0.228px;left:1256px;">TI Unit of</div>
<div class="t" style="top:827px;font-size:12.5px;line-height:12.5px;color:#505c6d;letter-spacing:-0.307px;left:1256px;">Measure Code</div>
<div class="t" style="top:811px;font-size:12.5px;line-height:12.5px;color:#505c6d;letter-spacing:-0.246px;right:962px;margin-right:0.246px;">Direct Unit Cost</div>
<div class="t" style="top:827px;font-size:12.5px;line-height:12.5px;color:#505c6d;letter-spacing:-0.249px;right:962px;margin-right:0.249px;">Excl. Tax</div>
<div class="t" style="top:811px;font-size:12.5px;line-height:12.5px;color:#505c6d;letter-spacing:-0.284px;right:854px;margin-right:0.284px;">Line Amount</div>
<div class="t" style="top:827px;font-size:12.5px;line-height:12.5px;color:#505c6d;letter-spacing:-0.249px;right:854px;margin-right:0.249px;">Excl. Tax</div>
<div class="t" style="top:825px;font-size:12.5px;line-height:12.5px;color:#505c6d;letter-spacing:-0.271px;right:746px;margin-right:0.271px;">Line Discount %</div>
<div class="t" style="top:825px;font-size:12.5px;line-height:12.5px;color:#505c6d;letter-spacing:-0.284px;left:1694px;">First Comment</div>
<div class="t" style="top:854px;font-size:14px;line-height:14px;color:#212121;left:87px;">Item</div>
<div class="t" style="top:854px;font-size:14px;line-height:14px;color:#212121;left:207px;">C300</div>
<svg style="left:334px;top:853px;" width="15" height="15" viewBox="0 0 15 15"><rect x="1.5" y="1.5" width="12" height="12" rx="2" fill="#fff" stroke="#333" stroke-width="1"/></svg>
<div class="t" style="top:854px;font-size:14px;line-height:14px;color:#212121;letter-spacing:-0.117px;left:375px;">Cod fillets sl/bl IQF 300-400 1x...</div>
<div class="t" style="top:854px;font-size:13.6px;line-height:13.6px;color:#212121;transform:scaleX(0.8356);transform-origin:left top;left:585px;">FREEZER_01</div>
<div class="t" style="top:854px;font-size:14px;line-height:14px;color:#212121;right:1632px;">0</div>
<div class="t" style="top:854px;font-size:14px;line-height:14px;color:#212121;right:1512px;">280</div>
<div class="t" style="top:854px;font-size:14px;line-height:14px;color:#212121;left:927px;">KG</div>
<div class="t" style="top:854px;font-size:14px;line-height:14px;color:#212121;right:1302px;">0</div>
<div class="t" style="top:854px;font-size:14px;line-height:14px;color:#212121;right:1182px;">14</div>
<div class="t" style="top:854px;font-size:14px;line-height:14px;color:#212121;left:1257px;">BOX</div>
<div class="t" style="top:854px;font-size:14px;line-height:14px;color:#212121;right:960px;">42.808</div>
<div class="t" style="top:854px;font-size:14px;line-height:14px;color:#212121;right:852px;">11,986.24</div>
<div style="left:1695px;top:867px;width:8px;height:1px;background:#00838c"></div>
<div class="t" style="top:882px;font-size:14px;line-height:14px;color:#212121;left:87px;">Item</div>
<div class="t" style="top:882px;font-size:14px;line-height:14px;color:#212121;left:207px;">00000001</div>
<svg style="left:334px;top:881px;" width="15" height="15" viewBox="0 0 15 15"><rect x="1.5" y="1.5" width="12" height="12" rx="2" fill="#fff" stroke="#333" stroke-width="1"/></svg>
<div class="t" style="top:882px;font-size:14px;line-height:14px;color:#212121;left:375px;">Cod Fillet - Loin</div>
<div class="t" style="top:882px;font-size:13.6px;line-height:13.6px;color:#212121;transform:scaleX(0.8356);transform-origin:left top;left:585px;">FREEZER_01</div>
<div class="t" style="top:882px;font-size:14px;line-height:14px;color:#212121;right:1632px;">0</div>
<div class="t" style="top:882px;font-size:14px;line-height:14px;color:#212121;right:1512px;">200</div>
<div class="t" style="top:882px;font-size:14px;line-height:14px;color:#212121;left:927px;">KG</div>
<div class="t" style="top:882px;font-size:14px;line-height:14px;color:#212121;right:1302px;">0</div>
<div class="t" style="top:882px;font-size:14px;line-height:14px;color:#212121;right:1182px;">20</div>
<div class="t" style="top:882px;font-size:14px;line-height:14px;color:#212121;left:1257px;">BOX</div>
<div class="t" style="top:882px;font-size:14px;line-height:14px;color:#212121;right:960px;">42.808</div>
<div class="t" style="top:882px;font-size:14px;line-height:14px;color:#212121;right:852px;">8,561.60</div>
<div style="left:1695px;top:895px;width:8px;height:1px;background:#00838c"></div>
<div style="left:56px;top:988px;width:1768px;height:16px;background:#f0f0f0"></div>
<div style="left:73px;top:990px;width:1427px;height:13px;background:#c1c1c1"></div>
<svg style="left:60px;top:992px;" width="8" height="9" viewBox="0 0 8 9"><path d="M6 0.5V8.5L1.5 4.5Z" fill="#a3a3a3"/></svg>
<svg style="left:1811px;top:992px;" width="8" height="9" viewBox="0 0 8 9"><path d="M1.5 0.5V8.5L6 4.5Z" fill="#505050"/></svg>
<div class="t" style="top:1051px;font-size:18px;line-height:18px;color:#262626;-webkit-text-stroke:0.3px #262626;letter-spacing:0.329px;left:56px;">Invoicing</div>
<div class="t" style="top:1056px;font-size:12px;line-height:12px;color:#505c6d;letter-spacing:-0.410px;right:594px;margin-right:0.410px;">Show less</div>
<div style="left:56px;top:1073px;width:1768px;height:2px;background:#3c4757"></div>
<div class="t" style="top:1101px;font-size:14px;line-height:14px;color:#505c6d;letter-spacing:-0.148px;left:56px;">Pay-to Vendor No.</div>
<div style="left:177px;top:1108px;width:113px;height:2px;background:repeating-linear-gradient(to left,#cdd1d7 0 2px,transparent 2px 8px)"></div>
<div style="left:298px;top:1093px;width:321px;height:29px;box-sizing:border-box;border:1px solid #8a929e;background:#fff"></div>
<svg style="left:599px;top:1104px;" width="14" height="8" viewBox="0 0 14 8"><path d="M0.8 0.8L6.5 6.5L12.2 0.8" fill="none" stroke="#212121" stroke-width="1"/></svg>
<div class="t" style="top:1101px;font-size:14px;line-height:14px;color:#212121;letter-spacing:-0.311px;left:303px;">7001000</div>
<div class="t" style="top:1101px;font-size:14px;line-height:14px;color:#505c6d;letter-spacing:-0.147px;left:659px;">Pay-to Address 2</div>
<div style="left:773px;top:1108px;width:120px;height:2px;background:repeating-linear-gradient(to left,#cdd1d7 0 2px,transparent 2px 8px)"></div>
<div style="left:900px;top:1093px;width:321px;height:29px;box-sizing:border-box;border:1px solid #8a929e;background:#fff"></div>
<div class="t" style="top:1101px;font-size:14px;line-height:14px;color:#212121;letter-spacing:-0.251px;left:905px;">Address 2 Str.</div>
<div class="t" style="top:1101px;font-size:14px;line-height:14px;color:#505c6d;letter-spacing:-0.151px;left:1262px;">Pay-to Country/Region Code</div>
<div style="left:1447px;top:1108px;width:48px;height:2px;background:repeating-linear-gradient(to left,#cdd1d7 0 2px,transparent 2px 8px)"></div>
<div style="left:1503px;top:1093px;width:321px;height:29px;box-sizing:border-box;border:1px solid #8a929e;background:#fff"></div>
<svg style="left:1804px;top:1104px;" width="14" height="8" viewBox="0 0 14 8"><path d="M0.8 0.8L6.5 6.5L12.2 0.8" fill="none" stroke="#212121" stroke-width="1"/></svg>
<div class="t" style="top:1101px;font-size:14px;line-height:14px;color:#212121;letter-spacing:-0.389px;left:1508px;">DK</div>
<div class="t" style="top:1139px;font-size:14px;line-height:14px;color:#505c6d;letter-spacing:-0.145px;left:56px;">Pay-to Contact No.</div>
<div style="left:181px;top:1146px;width:109px;height:2px;background:repeating-linear-gradient(to left,#cdd1d7 0 2px,transparent 2px 8px)"></div>
<div style="left:298px;top:1131px;width:321px;height:29px;box-sizing:border-box;border:1px solid #8a929e;background:#fff"></div>
<svg style="left:598.05px;top:1144.5px;" width="13.5" height="4" viewBox="0 0 13.5 4"><circle cx="2.0" cy="2" r="0.8" fill="#212121"/><circle cx="6.75" cy="2" r="0.8" fill="#212121"/><circle cx="11.5" cy="2" r="0.8" fill="#212121"/></svg>
<div class="t" style="top:1139px;font-size:14px;line-height:14px;color:#505c6d;letter-spacing:-0.151px;left:659px;">Pay-to Post Code</div>
<div style="left:776px;top:1146px;width:117px;height:2px;background:repeating-linear-gradient(to left,#cdd1d7 0 2px,transparent 2px 8px)"></div>
<div style="left:900px;top:1131px;width:321px;height:29px;box-sizing:border-box;border:1px solid #8a929e;background:#fff"></div>
<svg style="left:1201px;top:1142px;" width="14" height="8" viewBox="0 0 14 8"><path d="M0.8 0.8L6.5 6.5L12.2 0.8" fill="none" stroke="#212121" stroke-width="1"/></svg>
<div class="t" style="top:1139px;font-size:14px;line-height:14px;color:#212121;letter-spacing:-0.316px;left:905px;">DK-9000</div>
<div class="t" style="top:1139px;font-size:14px;line-height:14px;color:#505c6d;letter-spacing:-0.164px;left:1262px;">Payment Terms Code</div>
<div style="left:1403px;top:1146px;width:92px;height:2px;background:repeating-linear-gradient(to left,#cdd1d7 0 2px,transparent 2px 8px)"></div>
<div style="left:1503px;top:1131px;width:321px;height:29px;box-sizing:border-box;border:1px solid #8a929e;background:#fff"></div>
<svg style="left:1804px;top:1142px;" width="14" height="8" viewBox="0 0 14 8"><path d="M0.8 0.8L6.5 6.5L12.2 0.8" fill="none" stroke="#212121" stroke-width="1"/></svg>
<div class="t" style="top:1139px;font-size:14px;line-height:14px;color:#212121;letter-spacing:-0.435px;left:1508px;">CM</div>
<div class="t" style="top:1177px;font-size:14px;line-height:14px;color:#505c6d;letter-spacing:-0.163px;left:56px;">Pay-to Name</div>
<div style="left:145px;top:1184px;width:145px;height:2px;background:repeating-linear-gradient(to left,#cdd1d7 0 2px,transparent 2px 8px)"></div>
<div style="left:298px;top:1169px;width:321px;height:29px;box-sizing:border-box;border:1px solid #8a929e;background:#fff"></div>
<div class="t" style="top:1177px;font-size:14px;line-height:14px;color:#212121;letter-spacing:-0.265px;left:303px;">Fresh Fish Vendor 1</div>
<div class="t" style="top:1177px;font-size:14px;line-height:14px;color:#505c6d;letter-spacing:-0.137px;left:659px;">Pay-to City</div>
<div style="left:735px;top:1184px;width:158px;height:2px;background:repeating-linear-gradient(to left,#cdd1d7 0 2px,transparent 2px 8px)"></div>
<div style="left:900px;top:1169px;width:321px;height:29px;box-sizing:border-box;border:1px solid #8a929e;background:#fff"></div>
<svg style="left:1201px;top:1180px;" width="14" height="8" viewBox="0 0 14 8"><path d="M0.8 0.8L6.5 6.5L12.2 0.8" fill="none" stroke="#212121" stroke-width="1"/></svg>
<div class="t" style="top:1177px;font-size:14px;line-height:14px;color:#212121;letter-spacing:-0.270px;left:905px;">Alborg</div>
<div class="t" style="top:1177px;font-size:14px;line-height:14px;color:#505c6d;letter-spacing:-0.141px;left:1262px;">Prices Including VAT</div>
<div style="left:1397px;top:1184px;width:98px;height:2px;background:repeating-linear-gradient(to left,#cdd1d7 0 2px,transparent 2px 8px)"></div>
<svg style="left:1503px;top:1174px;" width="41" height="21" viewBox="0 0 41 21"><rect x="0.6" y="0.6" width="39.8" height="19.3" rx="9.6" fill="#fff" stroke="#505c6d" stroke-width="1.2"/><circle cx="10.6" cy="10.2" r="6" fill="#505c6d"/></svg>
<div class="t" style="top:1215px;font-size:14px;line-height:14px;color:#505c6d;letter-spacing:-0.149px;left:56px;">Pay-to Address</div>
<div style="left:158px;top:1222px;width:132px;height:2px;background:repeating-linear-gradient(to left,#cdd1d7 0 2px,transparent 2px 8px)"></div>
<div style="left:298px;top:1207px;width:321px;height:29px;box-sizing:border-box;border:1px solid #8a929e;background:#fff"></div>
<div class="t" style="top:1215px;font-size:14px;line-height:14px;color:#212121;letter-spacing:-0.251px;left:303px;">Address 1 Str.</div>
<div class="t" style="top:1215px;font-size:14px;line-height:14px;color:#505c6d;letter-spacing:-0.146px;left:659px;">Pay-to Contact</div>
<div style="left:759px;top:1222px;width:134px;height:2px;background:repeating-linear-gradient(to left,#cdd1d7 0 2px,transparent 2px 8px)"></div>
<div style="left:900px;top:1207px;width:321px;height:29px;box-sizing:border-box;border:1px solid #8a929e;background:#fff"></div>
<div class="t" style="top:1215px;font-size:14px;line-height:14px;color:#505c6d;letter-spacing:-0.155px;left:1262px;">Posting Document Type</div>
<div style="left:1417px;top:1222px;width:78px;height:2px;background:repeating-linear-gradient(to left,#cdd1d7 0 2px,transparent 2px 8px)"></div>
<div style="left:1503px;top:1207px;width:321px;height:29px;box-sizing:border-box;border:1px solid #8a929e;background:#fff"></div>
<svg style="left:1804px;top:1218px;" width="14" height="8" viewBox="0 0 14 8"><path d="M0.8 0.8L6.5 6.5L12.2 0.8" fill="none" stroke="#212121" stroke-width="1"/></svg>
<div class="t" style="top:1215px;font-size:14px;line-height:14px;color:#212121;letter-spacing:-0.270px;left:1508px;">Order (Purchase)</div>
<div style="left:1842px;top:189px;width:17px;height:1043px;background:#f0f0f0"></div>
<div style="left:1844px;top:206px;width:13px;height:718px;background:#c1c1c1"></div>
<svg style="left:1846px;top:195px;" width="9" height="6" viewBox="0 0 9 6"><path d="M0.5 5.5H8.5L4.5 0.5Z" fill="#a3a3a3"/></svg>
<svg style="left:1846px;top:1225px;" width="9" height="6" viewBox="0 0 9 6"><path d="M0.5 0.5H8.5L4.5 5.5Z" fill="#505050"/></svg>
<svg style="left:1900px;top:201px;" width="17" height="17" viewBox="0 0 17 17"><circle cx="8.5" cy="8.5" r="7" fill="none" stroke="#505c6d" stroke-width="1"/><path d="M8.5 7V12.5" stroke="#505c6d" stroke-width="1.1"/><circle cx="8.5" cy="5" r="0.8" fill="#505c6d"/></svg>
<div class="t" style="top:203px;font-size:16px;line-height:16px;color:#3d4a5c;-webkit-text-stroke:0.35px #3d4a5c;letter-spacing:-0.015px;left:1922px;">Details</div>
<div style="left:1899px;top:231px;width:74px;height:2px;background:#0b5e66"></div>
<svg style="left:2004px;top:203px;" width="13" height="16" viewBox="0 0 13 16"><path d="M4 5V12.5Q4 14.5 6.5 14.5Q9 14.5 9 12.5V3.5Q9 1.5 7 1.5Q5 1.5 5 3.5V11.5Q5 12.5 6.5 12.5Q8 12.5 8 11.5V5" fill="none" stroke="#505c6d" stroke-width="1"/></svg>
<div class="t" style="top:203px;font-size:16px;line-height:16px;color:#505c6d;letter-spacing:-0.162px;left:2023px;">Attachments (0)</div>
<div style="left:2336px;top:233px;width:17px;height:999px;background:#f0f0f0"></div>
<div style="left:2338px;top:250px;width:13px;height:672px;background:#c1c1c1"></div>
<svg style="left:2340px;top:239px;" width="9" height="6" viewBox="0 0 9 6"><path d="M0.5 5.5H8.5L4.5 0.5Z" fill="#a3a3a3"/></svg>
<svg style="left:2340px;top:1225px;" width="9" height="6" viewBox="0 0 9 6"><path d="M0.5 0.5H8.5L4.5 5.5Z" fill="#505050"/></svg>
<div class="t" style="top:251px;font-size:18px;line-height:18px;color:#262626;-webkit-text-stroke:0.3px #262626;letter-spacing:0.178px;left:1899px;">Attachments</div>
<div class="t" style="top:281px;font-size:14px;line-height:14px;color:#505c6d;letter-spacing:-0.123px;left:1899px;">Documents</div>
<div class="t" style="top:281px;font-size:14px;line-height:14px;color:#00808a;right:95px;">0</div>
<div style="left:1899px;top:316px;width:424px;height:2px;background:#b6bcc5"></div>
<div class="t" style="top:336px;font-size:18px;line-height:18px;color:#262626;-webkit-text-stroke:0.3px #262626;letter-spacing:-0.004px;left:1899px;">Vendor Statistics</div>
<div class="t" style="top:386px;font-size:14px;line-height:14px;color:#505c6d;left:1899px;">Vendor No.</div>
<div class="t" style="top:386px;font-size:14px;line-height:14px;color:#00808a;right:95px;">7001000</div>
<div class="t" style="top:416px;font-size:14px;line-height:14px;color:#505c6d;left:1899px;">Balance ($)</div>
<div class="t" style="top:416px;font-size:14px;line-height:14px;color:#00808a;right:95px;">16,141.20</div>
<div class="t" style="top:445px;font-size:14px;line-height:14px;color:#505c6d;left:1899px;">Balance (LCY) As Customer</div>
<div class="t" style="top:445px;font-size:14px;line-height:14px;color:#212121;right:95px;">0.00</div>
<div class="t" style="top:474px;font-size:14px;line-height:14px;color:#505c6d;left:1899px;">Outstanding Orders ($)</div>
<div class="t" style="top:474px;font-size:14px;line-height:14px;color:#00808a;right:95px;">0.00</div>
<div class="t" style="top:504px;font-size:14px;line-height:14px;color:#505c6d;left:1899px;">Amt. Rcd. Not Invd. ($)</div>
<div class="t" style="top:504px;font-size:14px;line-height:14px;color:#00808a;right:95px;">0.00</div>
<div class="t" style="top:533px;font-size:14px;line-height:14px;color:#505c6d;left:1899px;">Outstanding Invoices ($)</div>
<div class="t" style="top:533px;font-size:14px;line-height:14px;color:#00808a;right:95px;">0.00</div>
<div class="t" style="top:562px;font-size:14px;line-height:14px;color:#505c6d;left:1899px;">Total ($)</div>
<div class="t" style="top:562px;font-size:14px;line-height:14px;color:#212121;right:95px;">16,141.20</div>
<div class="t" style="top:592px;font-size:14px;line-height:14px;color:#505c6d;left:1899px;">Overdue Amounts ($) as of 02/21/23</div>
<div class="t" style="top:592px;font-size:14px;line-height:14px;color:#00808a;right:95px;">16,141.20</div>
<div class="t" style="top:621px;font-size:14px;line-height:14px;color:#505c6d;left:1899px;">Invoiced Prepayment Amount ($)</div>
<div class="t" style="top:621px;font-size:14px;line-height:14px;color:#212121;right:95px;">0.00</div>
<div class="t" style="top:650px;font-size:14px;line-height:14px;color:#505c6d;left:1899px;">Payments ($)</div>
<div class="t" style="top:650px;font-size:14px;line-height:14px;color:#00808a;right:95px;">0.00</div>
<div class="t" style="top:680px;font-size:14px;line-height:14px;color:#505c6d;left:1899px;">Refunds ($)</div>
<div class="t" style="top:680px;font-size:14px;line-height:14px;color:#00808a;right:95px;">0.00</div>
<div class="t" style="top:709px;font-size:14px;line-height:14px;color:#505c6d;left:1899px;">Last Payment Date</div>
<div style="left:2315px;top:723px;width:8px;height:1px;background:#00838c"></div>
<div style="left:1899px;top:744px;width:424px;height:2px;background:#b6bcc5"></div>
<div class="t" style="top:764px;font-size:18px;line-height:18px;color:#262626;-webkit-text-stroke:0.3px #262626;letter-spacing:0.128px;left:1899px;">Purchase Agreements Vendor History</div>
<div class="t" style="top:814px;font-size:14px;line-height:14px;color:#505c6d;left:1899px;">Vendor No.</div>
<div class="t" style="top:814px;font-size:14px;line-height:14px;color:#00808a;right:95px;">7001000</div>
<div class="t" style="top:838px;font-size:14px;line-height:14px;color:#505c6d;letter-spacing:0.059px;left:1899px;">Ongoing Agreements</div>
<div class="t" style="top:838px;font-size:14px;line-height:14px;color:#505c6d;letter-spacing:-0.252px;left:2087px;">Processed Agreements</div>
<div style="left:1899px;top:855px;width:90px;height:90px;background:#00818b"></div>
<div class="t" style="top:869px;font-size:23.5px;line-height:23.5px;color:#d6ecee;right:439px;">4</div>
<div class="t" style="top:915px;font-size:11px;line-height:11px;color:#ffffff;-webkit-text-stroke:0.3px #ffffff;left:1905px;">Blanket</div>
<div class="t" style="top:928px;font-size:11px;line-height:11px;color:#ffffff;-webkit-text-stroke:0.3px #ffffff;left:1905px;">Purchase Agr.</div>
<div style="left:1993px;top:855px;width:90px;height:90px;background:#00818b"></div>
<div class="t" style="top:869px;font-size:23.5px;line-height:23.5px;color:#d6ecee;letter-spacing:-2.250px;right:345px;margin-right:2.250px;">11</div>
<div class="t" style="top:915px;font-size:11px;line-height:11px;color:#ffffff;-webkit-text-stroke:0.3px #ffffff;left:1999px;">Receipt</div>
<div class="t" style="top:928px;font-size:11px;line-height:11px;color:#ffffff;-webkit-text-stroke:0.3px #ffffff;left:1999px;">Agreements</div>
<div style="left:2087px;top:855px;width:90px;height:90px;background:#00818b"></div>
<div class="t" style="top:869px;font-size:23.5px;line-height:23.5px;color:#d6ecee;right:251px;">0</div>
<div class="t" style="top:915px;font-size:11px;line-height:11px;color:#ffffff;-webkit-text-stroke:0.3px #ffffff;left:2093px;">Blanket</div>
<div class="t" style="top:928px;font-size:11px;line-height:11px;color:#ffffff;-webkit-text-stroke:0.3px #ffffff;left:2093px;">Purchase Agr.</div>
<div style="left:2181px;top:855px;width:90px;height:90px;background:#00818b"></div>
<div class="t" style="top:869px;font-size:23.5px;line-height:23.5px;color:#d6ecee;right:157px;">4</div>
<div class="t" style="top:915px;font-size:11px;line-height:11px;color:#ffffff;-webkit-text-stroke:0.3px #ffffff;left:2187px;">Receipt</div>
<div class="t" style="top:928px;font-size:11px;line-height:11px;color:#ffffff;-webkit-text-stroke:0.3px #ffffff;left:2187px;">Agreements</div>
<div style="left:1899px;top:967px;width:424px;height:2px;background:#b6bcc5"></div>
<div class="t" style="top:987px;font-size:18px;line-height:18px;color:#262626;-webkit-text-stroke:0.3px #262626;letter-spacing:0.388px;left:1899px;">Buy-from Vendor History</div>
<div class="t" style="top:1037px;font-size:14px;line-height:14px;color:#505c6d;left:1899px;">Vendor No.</div>
<div class="t" style="top:1037px;font-size:14px;line-height:14px;color:#00808a;right:95px;">7001000</div>
<div style="left:1899px;top:1078px;width:90px;height:90px;background:#00818b"></div>
<div class="t" style="top:1092px;font-size:23.5px;line-height:23.5px;color:#d6ecee;right:439px;">0</div>
<div class="t" style="top:1151px;font-size:11px;line-height:11px;color:#ffffff;-webkit-text-stroke:0.3px #ffffff;left:1905px;">Quotes</div>
<div style="left:1993px;top:1078px;width:90px;height:90px;background:#00818b"></div>
<div class="t" style="top:1092px;font-size:23.5px;line-height:23.5px;color:#d6ecee;right:345px;">0</div>
<div class="t" style="top:1151px;font-size:11px;line-height:11px;color:#ffffff;-webkit-text-stroke:0.3px #ffffff;left:1999px;">Blanket Orders</div>
<div style="left:2087px;top:1078px;width:90px;height:90px;background:#00818b"></div>
<div class="t" style="top:1092px;font-size:23.5px;line-height:23.5px;color:#d6ecee;right:251px;">0</div>
<div class="t" style="top:1151px;font-size:11px;line-height:11px;color:#ffffff;-webkit-text-stroke:0.3px #ffffff;left:2093px;">Orders</div>
<div style="left:2181px;top:1078px;width:90px;height:90px;background:#00818b"></div>
<div class="t" style="top:1092px;font-size:23.5px;line-height:23.5px;color:#d6ecee;right:157px;">0</div>
<div class="t" style="top:1151px;font-size:11px;line-height:11px;color:#ffffff;-webkit-text-stroke:0.3px #ffffff;left:2187px;">Invoices</div>
<div style="left:1899px;top:1172px;width:90px;height:90px;background:#00818b"></div>
<div class="t" style="top:1186px;font-size:23.5px;line-height:23.5px;color:#d6ecee;right:439px;">0</div>
<div style="left:1993px;top:1172px;width:90px;height:90px;background:#00818b"></div>
<div class="t" style="top:1186px;font-size:23.5px;line-height:23.5px;color:#d6ecee;right:345px;">0</div>
<div style="left:2087px;top:1172px;width:90px;height:90px;background:#00818b"></div>
<div class="t" style="top:1186px;font-size:23.5px;line-height:23.5px;color:#d6ecee;right:251px;">0</div>
<div style="left:2181px;top:1172px;width:90px;height:90px;background:#00818b"></div>
<div class="t" style="top:1186px;font-size:23.5px;line-height:23.5px;color:#d6ecee;right:157px;">5</div>
<div style="left:-35px;top:596px;width:46px;height:46px;border-radius:50%;background:#4f5b6d"></div></div></body></html>
